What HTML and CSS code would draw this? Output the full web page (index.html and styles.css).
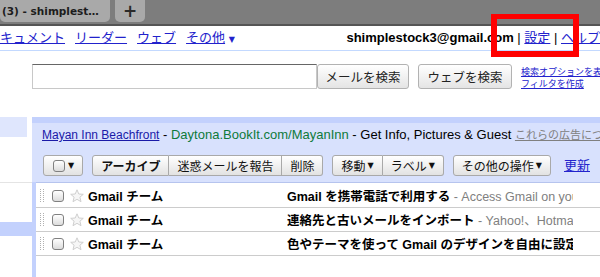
FILE: index.html
```html
<!DOCTYPE html>
<html lang="ja">
<head>
<meta charset="utf-8">
<title>Gmail</title>
<link rel="stylesheet" href="styles.css">
</head>
<body>
<div class="tabbar">
  <div class="tab">(3) - shimplest…</div>
  <div class="tab tab-new">+</div>
</div>
<div class="topnav">
  <div class="apps">
    <a href="#">キュメント</a><a href="#">リーダー</a><a href="#">ウェブ</a><span class="more"><a href="#">その他</a> <span class="arrow">▼</span></span>
  </div>
  <div class="account"><b>shimplestock3@gmail.com</b> | <a href="#">設定</a> | <a href="#">ヘルプ</a></div>
</div>
<div class="search">
  <input class="q" type="text">
  <button class="sbtn">メールを検索</button>
  <button class="sbtn web">ウェブを検索</button>
  <div class="slinks"><a href="#">検索オプションを表示</a><a href="#">フィルタを作成</a></div>
</div>
<div class="content">
  <div class="side">
    <div class="side-item"></div>
    <div class="side-rule"></div>
    <div class="side-sel"></div>
  </div>
  <div class="main">
    <div class="ad"><a class="ad-title" href="#">Mayan Inn Beachfront</a> - <span class="ad-url">Daytona.BookIt.com/MayanInn</span> - Get Info, Pictures &amp; Guest <a class="ad-about" href="#">これらの広告について</a></div>
    <div class="toolbar">
      <div class="btn chk"><span class="cb"></span><span class="dd">▼</span></div>
      <div class="group">
        <div class="btn bold">アーカイブ</div>
        <div class="btn">迷惑メールを報告</div>
        <div class="btn">削除</div>
      </div>
      <div class="group">
        <div class="btn">移動<span class="dd">▼</span></div>
        <div class="btn">ラベル<span class="dd">▼</span></div>
      </div>
      <div class="btn">その他の操作<span class="dd">▼</span></div>
      <a class="refresh" href="#">更新</a>
    </div>
    <div class="rows">
      <div class="row">
        <span class="handle"></span>
        <span class="cb"></span>
        <svg class="star" width="14" height="14" viewBox="0 0 14 14"><path d="M7 0.8 L8.8 5 L13.3 5.3 L9.9 8.2 L11 12.7 L7 10.3 L3 12.7 L4.1 8.2 L0.7 5.3 L5.2 5 Z" fill="#f6f6f6" stroke="#cfcfcf" stroke-width="1"/></svg>
        <span class="from">Gmail チーム</span>
        <span class="subj"><b>Gmail を携帯電話で利用する</b><span class="snip"> - Access Gmail on your mobile phone</span></span>
        <span></span>
      </div>
      <div class="row">
        <span class="handle"></span>
        <span class="cb"></span>
        <svg class="star" width="14" height="14" viewBox="0 0 14 14"><path d="M7 0.8 L8.8 5 L13.3 5.3 L9.9 8.2 L11 12.7 L7 10.3 L3 12.7 L4.1 8.2 L0.7 5.3 L5.2 5 Z" fill="#f6f6f6" stroke="#cfcfcf" stroke-width="1"/></svg>
        <span class="from">Gmail チーム</span>
        <span class="subj"><b>連絡先と古いメールをインポート</b><span class="snip"> - Yahoo!、Hotmail</span></span>
        <span></span>
      </div>
      <div class="row">
        <span class="handle"></span>
        <span class="cb"></span>
        <svg class="star" width="14" height="14" viewBox="0 0 14 14"><path d="M7 0.8 L8.8 5 L13.3 5.3 L9.9 8.2 L11 12.7 L7 10.3 L3 12.7 L4.1 8.2 L0.7 5.3 L5.2 5 Z" fill="#f6f6f6" stroke="#cfcfcf" stroke-width="1"/></svg>
        <span class="from">Gmail チーム</span>
        <span class="subj"><b>色やテーマを使って Gmail のデザインを自由に設定</b></span>
        <span></span>
      </div>
    </div>
  </div>
</div>
<div class="callout"></div>
</body>
</html>
```
FILE: styles.css
```css
* { box-sizing: border-box; }
html, body { margin: 0; padding: 0; }
body {
  width: 600px;
  height: 277px;
  overflow: hidden;
  position: relative;
  background: #fff;
  color: #000;
  font-family: "Liberation Sans", "Noto Sans CJK JP", sans-serif;
  font-size: 13px;
}
a { color: #2222cc; text-decoration: underline; }

/* browser tab strip */
.tabbar {
  height: 26px;
  background: #7d7d7d;
  border-bottom: 2px solid #555;
  display: flex;
  gap: 5px;
  align-items: flex-start;
}
.tab {
  flex-shrink: 0;
  width: 110px;
  height: 22px;
  background: #a9a9a9;
  border-radius: 0 0 5px 5px;
  padding-left: 2px;
  font: bold 10.5px/22px "DejaVu Sans", sans-serif;
  color: #1c1c1c;
  white-space: nowrap;
  overflow: hidden;
}
.tab-new {
  width: 30px;
  padding: 0;
  text-align: center;
  font-size: 17px;
  line-height: 22px;
  color: #2a2a2a;
}

/* top navigation */
.topnav {
  height: 25px;
  border-bottom: 1px solid #c3d9ff;
  display: flex;
  justify-content: space-between;
  align-items: center;
  line-height: 24px;
  white-space: nowrap;
}
.apps { display: flex; gap: 10px; align-items: center; }
.arrow { color: #2222cc; font: 8px "DejaVu Sans", sans-serif; }

/* search row */
.search {
  display: flex;
  align-items: flex-start;
  height: 25px;
  margin: 13px 0 0 32px;
}
.q {
  flex-shrink: 0;
  width: 285px;
  height: 25px;
  margin: 0;
  padding: 0;
  border: 1px solid #c8c8c8;
  border-top-color: #666;
  background: #fff;
}
.sbtn {
  flex-shrink: 0;
  width: 92px;
  height: 25px;
  margin: 0;
  padding: 0;
  border: 1px solid #b2b2b2;
  border-radius: 3px;
  background: linear-gradient(#ffffff, #e4e4e4);
  color: #222;
  font: 12.5px "Liberation Sans", "Noto Sans CJK JP", sans-serif;
}
.web { width: 94px; margin-left: 9px; }
.slinks {
  flex-shrink: 0;
  margin-left: 9px;
  padding-top: 2px;
  display: flex;
  flex-direction: column;
  font-size: 9px;
  line-height: 12px;
  white-space: nowrap;
}

/* content */
.content {
  display: grid;
  grid-template-columns: 32px 1fr;
  margin-top: 28px;
  height: 160px;
}
.side { display: flex; flex-direction: column; }
.side-item { width: 27px; height: 20px; background: #dfe6fd; }
.side-rule { margin-top: 45px; height: 1px; background: #e4e4e4; }
.side-sel { margin-top: 39px; height: 14px; background: #c3d1fd; }

.main {
  min-width: 0;
  overflow: hidden;
  background: #c3d1fd;
  padding-top: 6px;
  display: flex;
  flex-direction: column;
}
.ad, .toolbar { background: #d8e1fd; }
.ad {
  height: 24px;
  line-height: 24px;
  padding-left: 10px;
  font-size: 13px;
  white-space: nowrap;
  overflow: hidden;
}
.ad .ad-title { color: #1a1aa8; font-size: 12px; }
.ad-url { color: #0e7a3a; }
.ad .ad-about { color: #808080; font-size: 11px; }

.toolbar {
  height: 35px;
  padding: 8px 0 0 11px;
  display: flex;
  align-items: flex-start;
  gap: 9px;
  white-space: nowrap;
}
.btn {
  flex-shrink: 0;
  height: 21px;
  padding: 0 8px;
  border: 1px solid #a9a9a9;
  border-radius: 3px;
  background: linear-gradient(#ffffff, #e2e2e2);
  font-size: 12px;
  display: flex;
  align-items: center;
  color: #111;
}
.bold { font-weight: bold; }
.group { display: flex; flex-shrink: 0; }
.group .btn { border-radius: 0; }
.group .btn + .btn { border-left: none; }
.group .btn:first-child { border-radius: 3px 0 0 3px; }
.group .btn:last-child { border-radius: 0 3px 3px 0; }
.dd { font: 8px "DejaVu Sans", sans-serif; margin-left: 2px; }
.chk { padding: 0 8px 0 9px; }
.cb {
  display: inline-block;
  width: 12px;
  height: 12px;
  border: 1px solid #808080;
  border-radius: 3px;
  background: linear-gradient(#ffffff, #dcdcdc);
}
.chk .dd { margin-left: 3px; }
.refresh { margin-left: 4px; font-size: 13px; line-height: 21px; }

.rows {
  margin-left: 4px;
  background: #fff;
  border-top: 1px solid #b6c4ee;
  padding-top: 1px;
  flex: 1;
}
.row {
  display: grid;
  grid-template-columns: 16px 18px 18px 199px 286px 1fr;
  align-items: center;
  height: 24px;
  border-bottom: 1px solid #cccccc;
  font-size: 12.5px;
  white-space: nowrap;
}
.handle {
  width: 5px;
  height: 14px;
  margin-left: 4px;
  background: radial-gradient(circle at 0.5px 0.5px, #b0b0b0 0.8px, transparent 0.9px) 0 0 / 3px 2px;
}
.star { display: block; }
.from { font-weight: bold; }
.subj { display: block; min-width: 0; overflow: hidden; }
.snip { color: #808080; }

/* red annotation rectangle laid over the screenshot */
.callout {
  position: absolute;
  left: 491px;
  top: 14px;
  width: 88px;
  height: 43px;
  border-style: solid;
  border-color: #ff0000;
  border-width: 5px 6px 6px 6px;
}
```
